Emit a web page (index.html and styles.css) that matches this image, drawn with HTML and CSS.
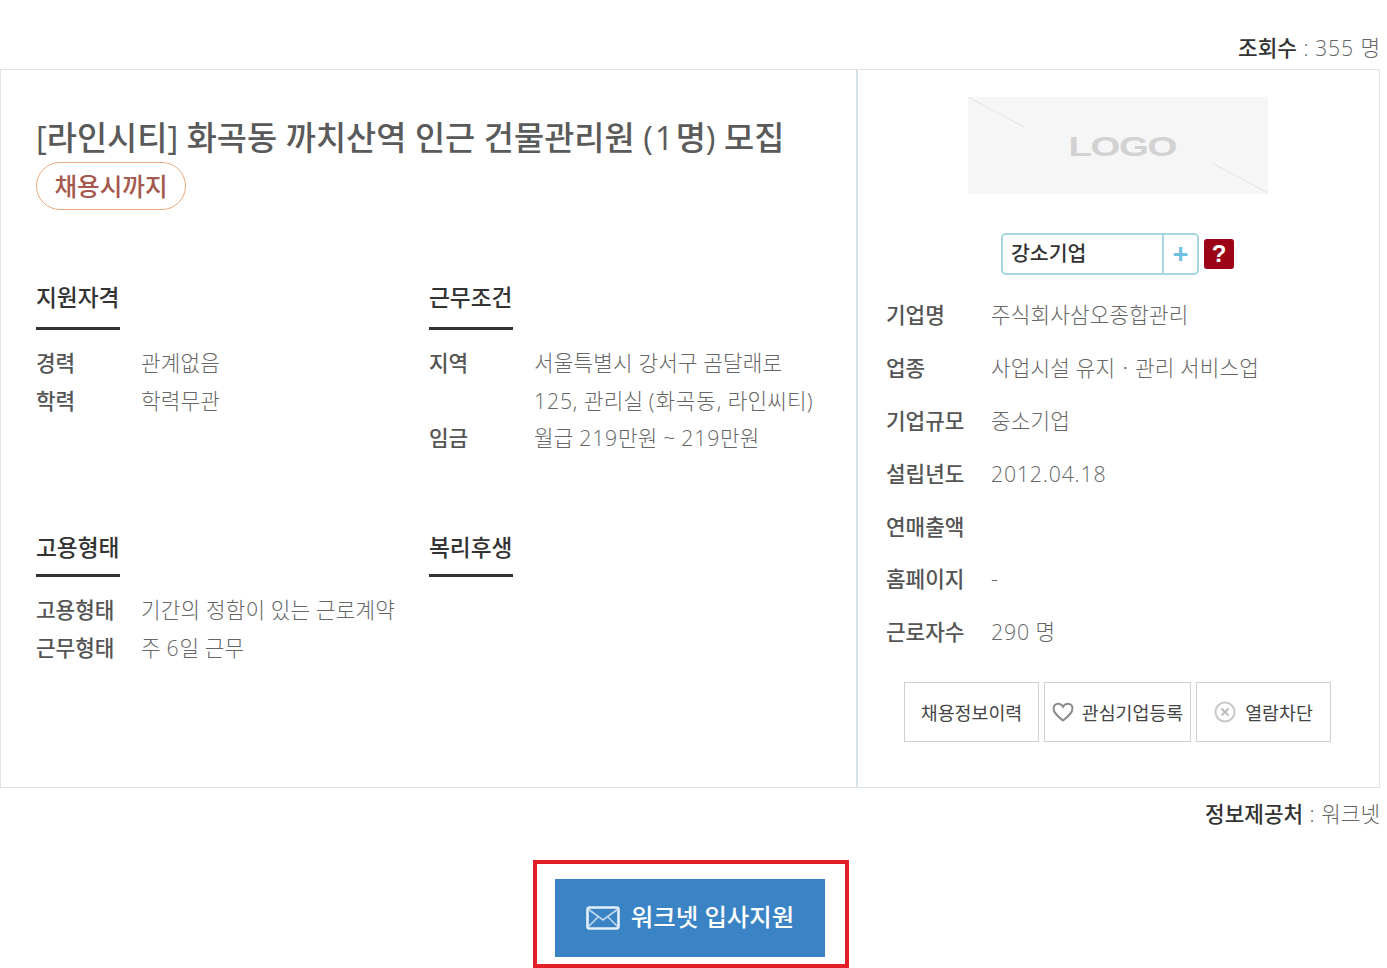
FILE: index.html
```html
<!DOCTYPE html>
<html lang="ko">
<head>
<meta charset="utf-8">
<title>채용정보</title>
<link rel="stylesheet" href="styles.css">
</head>
<body>
<div class="page">
  <p class="meta meta-top"><b>조회수</b> : <span class="num">355</span> 명</p>
  <div class="box">
    <section class="main">
      <h1 class="title">[라인시티] 화곡동 까치산역 인근 건물관리원 (<span class="num-title">1</span>명) 모집</h1>
      <span class="deadline">채용시까지</span>
      <div class="info-grid">
        <div class="block">
          <h2 class="block-title">지원자격</h2>
          <dl class="rows">
            <dt>경력</dt><dd>관계없음</dd>
            <dt>학력</dt><dd>학력무관</dd>
          </dl>
        </div>
        <div class="block">
          <h2 class="block-title">근무조건</h2>
          <dl class="rows">
            <dt>지역</dt><dd>서울특별시 강서구 곰달래로 <span class="num">125,</span> 관리실 <span class="num">(화곡동,</span> 라인씨티)</dd>
            <dt>임금</dt><dd>월급 <span class="num">219</span>만원 ~ <span class="num">219</span>만원</dd>
          </dl>
        </div>
        <div class="block">
          <h2 class="block-title block-title-low">고용형태</h2>
          <dl class="rows">
            <dt>고용형태</dt><dd>기간의 정함이 있는 근로계약</dd>
            <dt>근무형태</dt><dd>주 <span class="num">6</span>일 근무</dd>
          </dl>
        </div>
        <div class="block">
          <h2 class="block-title block-title-low">복리후생</h2>
        </div>
      </div>
    </section>
    <aside class="side">
      <div class="logo">
        <svg class="logo-lines" width="300" height="97" viewBox="0 0 300 97">
          <path d="M0 0L56 30M244 66L300 96" stroke="#e2e2e2" stroke-width="1" fill="none"/>
        </svg>
        <span class="logo-text">LOGO</span>
      </div>
      <div class="tag-row">
        <div class="tag"><span class="tag-name">강소기업</span><span class="tag-plus">+</span></div>
        <span class="help">?</span>
      </div>
      <dl class="company">
        <dt>기업명</dt><dd>주식회사삼오종합관리</dd>
        <dt>업종</dt><dd>사업시설 유지ㆍ관리 서비스업</dd>
        <dt>기업규모</dt><dd>중소기업</dd>
        <dt>설립년도</dt><dd class="num">2012.04.18</dd>
        <dt>연매출액</dt><dd></dd>
        <dt>홈페이지</dt><dd>-</dd>
        <dt>근로자수</dt><dd><span class="num">290</span> 명</dd>
      </dl>
      <div class="actions">
        <a class="action a1">채용정보이력</a>
        <a class="action a2">
          <svg width="22" height="20" viewBox="0 0 22 20"><path d="M11 18.500C6 14.500 1.500 11 1.500 6.500C1.500 3.500 3.700 1.800 6 1.800C8 1.800 10 3 11 4.800C12 3 14 1.800 16 1.800C18.300 1.800 20.500 3.500 20.500 6.500C20.500 11 16 14.500 11 18.500Z" fill="none" stroke="#8c8c8c" stroke-width="2"/></svg>
          관심기업등록</a>
        <a class="action a3">
          <svg width="22" height="22" viewBox="0 0 22 22"><circle cx="11" cy="11" r="9.500" fill="none" stroke="#c8c8c8" stroke-width="2"/><path d="M7.500 7.500L14.500 14.500M14.500 7.500L7.500 14.500" stroke="#bcbcbc" stroke-width="2"/></svg>
          열람차단</a>
      </div>
    </aside>
  </div>
  <p class="meta meta-bottom"><b>정보제공처</b> : 워크넷</p>
  <div class="apply-wrap">
    <a class="apply">
      <svg width="34" height="24" viewBox="0 0 34 24"><rect x="1.500" y="1.500" width="31" height="21" rx="2" fill="none" stroke="#e4eff8" stroke-width="2.600"/><path d="M2 3L17 14L32 3M2 21L12.500 10.500M32 21L21.500 10.500" fill="none" stroke="#c3daee" stroke-width="1.600"/></svg>
      <span class="apply-label">워크넷 입사지원</span>
    </a>
  </div>
</div>
</body>
</html>
```
FILE: styles.css
```css
* { box-sizing: border-box; }
html, body { margin: 0; padding: 0; background: #fff; }
body {
  font-family: "Open Sans", "Noto Sans CJK KR", sans-serif;
  color: #555;
  overflow: hidden;
}
.page { width: 1380px; height: 968px; padding-top: 33px; }
.num { letter-spacing: 0.800px; }
.num-title { padding: 0 2px; }
.meta {
  margin: 0;
  text-align: right;
  font-size: 21.300px;
  line-height: 30px;
  font-weight: 300;
  color: #666;
  word-spacing: 1px;
}
.meta b { font-weight: 500; color: #333; }
.meta-top { height: 36px; }
.meta-bottom { margin-top: 11px; }
.box {
  display: flex;
  height: 719px;
  border: 1px solid #dde3e6;
}
.main {
  width: 857px;
  border-right: 2px solid #d7e1e8;
  padding: 42px 0 0 35px;
}
.title {
  margin: 0;
  font-size: 32.800px;
  line-height: 52px;
  font-weight: 500;
  color: #5a5a5a;
  white-space: nowrap;
}
.deadline {
  display: block;
  width: 150px;
  height: 48px;
  margin-top: -2px;
  border: 1px solid #e8aa7e;
  border-radius: 24px;
  text-align: center;
  font-size: 24.600px;
  line-height: 47px;
  font-weight: 500;
  color: #a5584d;
}
.info-grid {
  display: grid;
  grid-template-columns: 393px 1fr;
  grid-template-rows: 247px auto;
  margin-top: 69px;
}
.block-title {
  display: inline-block;
  margin: 0;
  height: 51px;
  border-bottom: 3px solid #333;
  font-size: 22.700px;
  line-height: 38px;
  font-weight: 500;
  color: #333;
}
.block-title-low { line-height: 44px; }
.rows {
  display: grid;
  grid-template-columns: 105px 1fr;
  margin: 14px 0 0;
  width: 392px;
  font-size: 21.300px;
  line-height: 37.500px;
}
.rows dt { font-weight: 500; color: #555; }
.rows dd { margin: 0; font-weight: 300; color: #666; letter-spacing: 0.150px; }
.rows dd .num { letter-spacing: 0.800px; }
.side { flex: 1; padding: 27px 0 0 0; }
.logo {
  position: relative;
  width: 300px;
  height: 97px;
  margin-left: 110px;
  padding: 2px 0 0 9px;
  background: #f6f6f6;
  display: flex;
  align-items: center;
  justify-content: center;
}
.logo-lines { position: absolute; left: 0; top: 0; }
.logo-text {
  font-family: "Liberation Sans", sans-serif;
  font-size: 28px;
  font-weight: 700;
  color: #d2d2d2;
  transform: scaleX(1.370);
  letter-spacing: -1px;
}
.tag-row {
  display: flex;
  align-items: center;
  gap: 5px;
  margin: 39px 0 0 143px;
}
.tag {
  display: flex;
  width: 198px;
  height: 42px;
  border: 2px solid #a4d6e6;
  border-radius: 5px;
}
.tag-name {
  width: 161px;
  padding-left: 8px;
  border-right: 2px solid #a4d6e6;
  font-size: 20.500px;
  line-height: 36px;
  font-weight: 500;
  color: #333;
}
.tag-plus {
  flex: 1;
  text-align: center;
  font-size: 28px;
  line-height: 36px;
  font-weight: 700;
  color: #6fbfe0;
}
.help {
  width: 30px;
  height: 30px;
  border-radius: 3px;
  background: #9c0317;
  color: #fff;
  text-align: center;
  font-family: "Liberation Sans", sans-serif;
  font-size: 24px;
  line-height: 30px;
  font-weight: 700;
}
.company {
  display: grid;
  grid-template-columns: 105px 1fr;
  grid-auto-rows: 52.900px;
  margin: 14px 0 0 28px;
  font-size: 21.300px;
  line-height: 52.900px;
}
.company dt { font-weight: 500; color: #555; }
.company dd { margin: 0; font-weight: 300; color: #666; letter-spacing: 0.150px; }
.company dd.num, .company dd .num { letter-spacing: 0.800px; }
.actions {
  display: flex;
  gap: 5px;
  margin: 23px 0 0 46px;
}
.action {
  display: flex;
  align-items: center;
  justify-content: center;
  gap: 8px;
  height: 60px;
  border: 1px solid #cfcfcf;
  font-size: 18.400px;
  color: #444;
  white-space: nowrap;
}
.a1 { width: 135px; }
.a2 { width: 147px; }
.a3 { width: 135px; gap: 9px; }
.apply-wrap {
  width: 316px;
  height: 108px;
  margin: 31px 0 0 533px;
  border: 4px solid #e21f26;
  padding: 15px 0 0 18px;
}
.apply {
  display: flex;
  align-items: center;
  justify-content: center;
  gap: 11px;
  width: 270px;
  height: 78px;
  background: #3a84c5;
  color: #fff;
  font-size: 24.400px;
  font-weight: 500;
}
.apply-label { margin-bottom: 5px; }
```
